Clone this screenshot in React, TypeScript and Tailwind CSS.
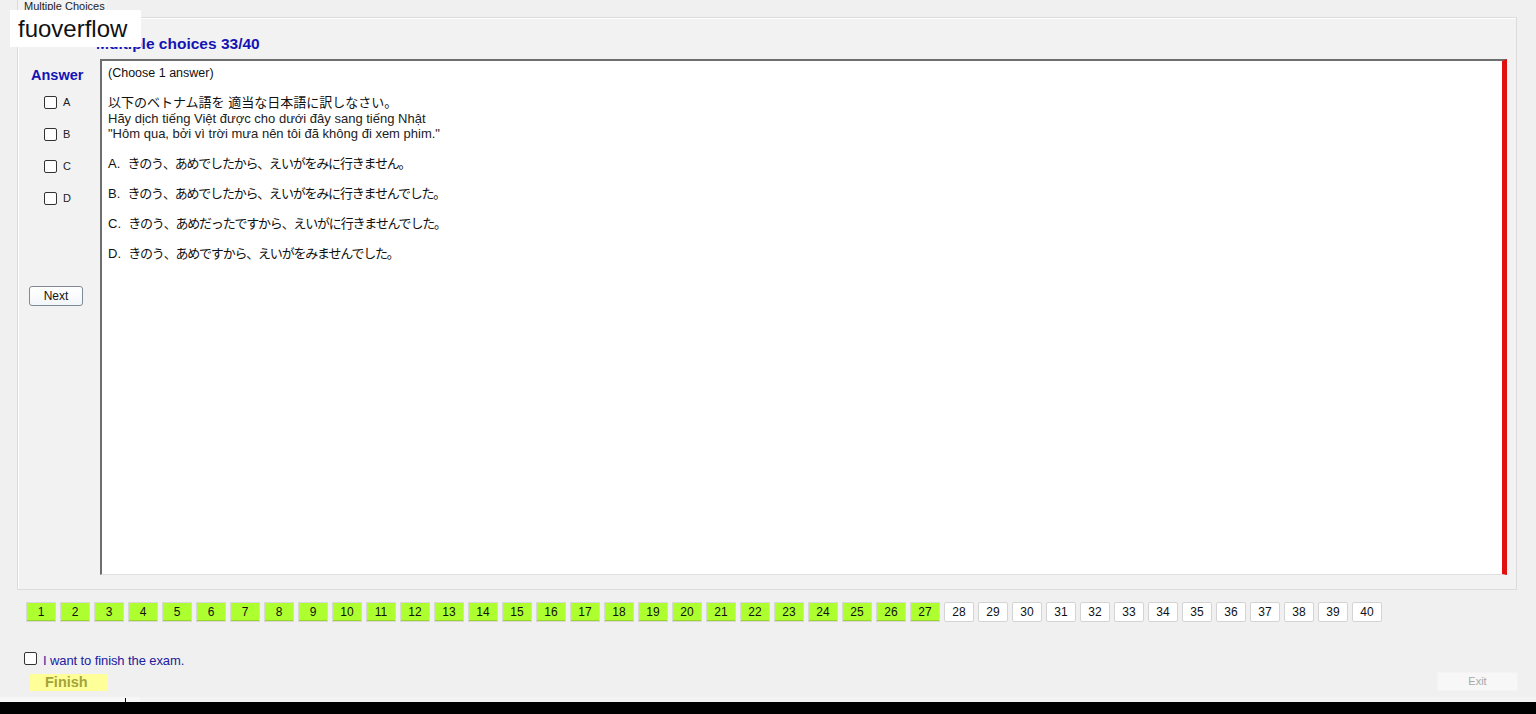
import React from "react";

const font = { fontFamily: '"Liberation Sans", Arial, sans-serif' };
const jp = { fontFamily: '"Liberation Sans", Arial, "Noto Sans CJK JP", sans-serif' };

function Box() {
  return <div className="w-[13px] h-[13px] border border-[#333333] rounded-[2px] bg-white shrink-0" />;
}

export default function App() {
  const nums = Array.from({ length: 40 }, (_, i) => i + 1);
  return (
    <div className="w-[1536px] h-[714px] bg-[#f0f0f0] relative overflow-hidden text-black" style={font}>
      {/* tab header */}
      <div className="h-[17px] flex">
        <div className="ml-[17px] w-[90px] h-[17px] border-l border-[#dadada] bg-[#f3f3f3] text-[11px] leading-[13px] pl-[6px] text-[#222]">
          Multiple Choices
        </div>
      </div>
      {/* group panel */}
      <div className="ml-[17px] w-[1500px] h-[573px] border border-[#dcdcdc] shadow-[inset_1px_1px_0_#ffffff] bg-[#f2f2f2]">
        <div className="h-[41px] pt-[17px] pl-[78px]">
          <div className="text-[15.5px] leading-[18px] font-bold text-[#1414b4]">Multiple choices 33/40</div>
        </div>
        <div className="flex">
          <div className="w-[82px] shrink-0 relative h-[516px]">
            <div className="pt-[8px] pl-[13px] text-[14.5px] leading-[17px] font-bold text-[#1414b4]">Answer</div>
            <div className="pt-[12px] flex flex-col gap-[19px]">
              {["A", "B", "C", "D"].map((l) => (
                <div key={l} className="flex items-center pl-[26px] h-[13px]">
                  <Box />
                  <span className="ml-[6px] text-[11px] leading-[13px] text-[#222]">{l}</span>
                </div>
              ))}
            </div>
            <div className="mt-[81px] ml-[11px] w-[54px] h-[20px] rounded-[3px] border border-[#7f8a99] bg-gradient-to-b from-[#ffffff] to-[#f3f6fa] flex items-center justify-center text-[12px] text-[#111]">
              Next
            </div>
          </div>
          <div className="w-[1407px] h-[516px] bg-white border-t-2 border-l-2 border-t-[#6e6e6e] border-l-[#6e6e6e] border-b border-b-[#e0e0e0] border-r-[5px] border-r-[#e01010] pl-[6px] pt-[5px]" style={jp}>
            <div className="text-[12.5px] leading-[15px] text-[#111]">(Choose 1 answer)</div>
            <div className="mt-[13px] text-[13px] leading-[17px] text-[#111]">以下のベトナム語を 適当な日本語に訳しなさい。</div>
            <div className="text-[13px] leading-[15px] text-[#222]">Hãy dịch tiếng Việt được cho dưới đây sang tiếng Nhật</div>
            <div className="text-[13px] leading-[15px] text-[#222]">"Hôm qua, bởi vì trời mưa nên tôi đã không đi xem phim."</div>
            <div className="mt-[15px] flex flex-col gap-[14px] text-[13px] leading-[16px] text-[#111]">
              <div>A.&nbsp; <span className="tracking-[-1.2px]">きのう、あめでしたから、えいがをみに行きません。</span></div>
              <div>B.&nbsp; <span className="tracking-[-1.2px]">きのう、あめでしたから、えいがをみに行きませんでした。</span></div>
              <div>C.&nbsp; <span className="tracking-[-1.2px]">きのう、あめだったですから、えいがに行きませんでした。</span></div>
              <div>D.&nbsp; <span className="tracking-[-1.2px]">きのう、あめですから、えいがをみませんでした。</span></div>
            </div>
          </div>
        </div>
      </div>
      {/* question navigator */}
      <div className="mt-[12px] pl-[26px] flex gap-[4px] h-[20px]">
        {nums.map((n) => (
          <div
            key={n}
            className={
              n <= 27
                ? "w-[30px] h-[20px] border border-[#d8d8d8] bg-[#adff2f] shadow-[inset_0_-1px_0_#9ad62a] flex items-center justify-center text-[12px] text-[#111]"
                : "w-[30px] h-[20px] border border-[#d4d4d4] rounded-[2px] bg-white flex items-center justify-center text-[12px] text-[#111]"
            }
          >
            {n}
          </div>
        ))}
      </div>
      {/* finish checkbox */}
      <div className="mt-[30px] pl-[24px] flex items-center h-[13px]">
        <Box />
        <span className="ml-[6px] pt-[3px] text-[13px] leading-[13px] text-[#2020a0] tracking-[-0.1px]">I want to finish the exam.</span>
      </div>
      <div className="mt-[7px] h-[19px] flex justify-between">
        <div className="ml-[30px] mt-[2px] w-[78px] h-[17px] bg-[#ffff99] flex items-center pl-[15px] text-[14.5px] font-bold text-[#a3a33a]">
          Finish
        </div>
        <div className="mr-[18px] w-[81px] h-[19px] bg-[#f7f7f7] border border-[#f3f3f3] flex items-center justify-center text-[11px] text-[#a8a8a8]">
          Exit
        </div>
      </div>
      <div className="h-[6px]" />
      <div className="h-[5px] flex">
        <div className="w-[140px] bg-[#f7f7f7] relative">
          <div className="absolute left-[125px] top-[1px] w-[1px] h-[4px] bg-black" />
        </div>
        <div className="flex-1 bg-[#f3f3f3]" />
      </div>
      <div className="h-[12px] bg-black" />
      {/* watermark */}
      <div className="absolute left-[10px] top-[10px] w-[131px] h-[37px] bg-white flex items-center pl-[8px] text-[24px] text-[#111]">
        fuoverflow
      </div>
    </div>
  );
}
